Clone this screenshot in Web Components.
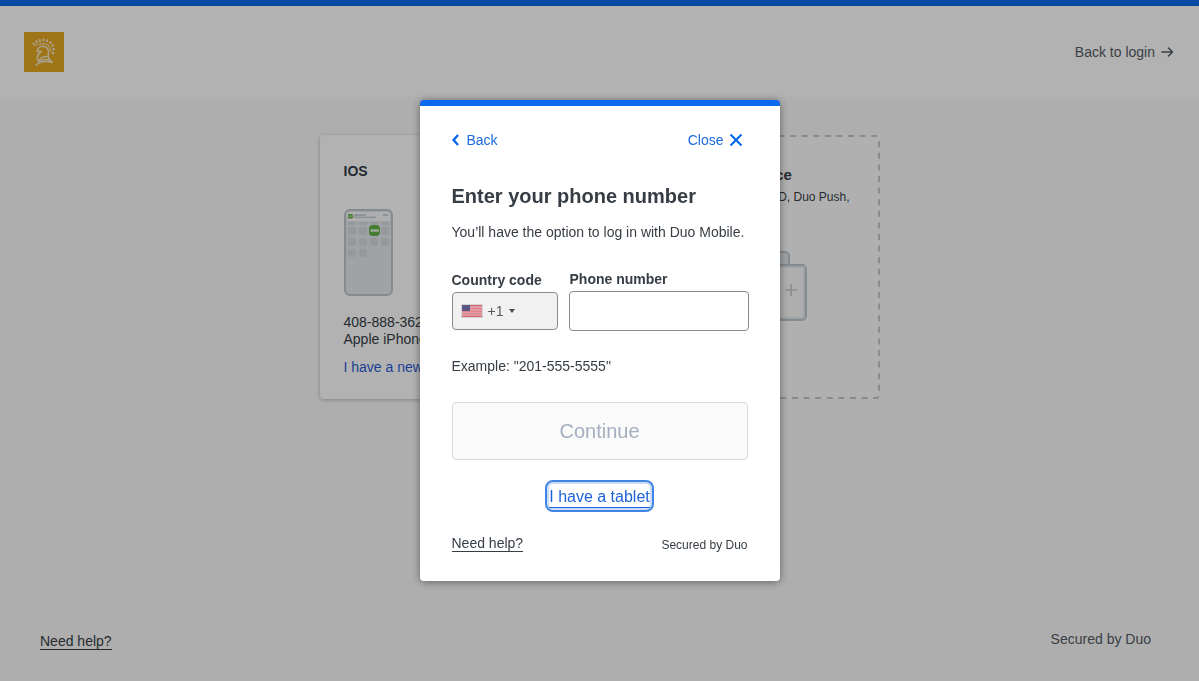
<!DOCTYPE html>
<html lang="en">
<head>
<meta charset="utf-8">
<meta name="viewport" content="width=device-width, initial-scale=1">
<title>Add a device</title>
<style>
  body { margin: 0; font: 14px/20px "Liberation Sans", Arial, sans-serif; color: #363d45; background: #fafafa; }
</style>
</head>
<body>
<device-portal>
  <portal-header slot="header"></portal-header>
  <device-card slot="devices" name="IOS" phone="408-888-3621" model="Apple iPhone"></device-card>
  <add-device-card slot="devices"></add-device-card>
  <portal-footer slot="footer"></portal-footer>
</device-portal>
<modal-layer>
  <phone-form></phone-form>
</modal-layer>

<script>
const define = (name, html) => customElements.define(name, class extends HTMLElement {
  constructor() {
    super();
    const t = document.createElement('template');
    t.innerHTML = '<style>*{box-sizing:border-box}h1,h2,p{margin:0}</style>' + html;
    this.attachShadow({ mode: 'open' }).append(t.content.cloneNode(true));
    for (const el of this.shadowRoot.querySelectorAll('[data-attr]'))
      el.textContent = this.getAttribute(el.dataset.attr) || '';
  }
});

define('device-portal', `
  <style>
    :host { display: flex; flex-direction: column; min-height: 100vh; }
    main { flex: 1; display: grid; grid-template-columns: 268px 268px; gap: 24px; justify-content: center; align-content: start; padding: 38px 24px; }
  </style>
  <slot name="header"></slot>
  <main><slot name="devices"></slot></main>
  <slot name="footer"></slot>`);

define('spartan-logo', `
  <style>:host { display: block; width: 40px; height: 40px; background: #e5a823; } svg { display: block; }</style>
  <svg width="40" height="40" viewBox="0 0 40 40" fill="none" stroke="#f3e6c4" stroke-linecap="round" stroke-linejoin="round" role="img" aria-label="Spartan">
    <path d="M9.500 12l.8.3M12.300 9.300l.5.700M15.700 8l.2.900M19.500 7.500v.9M23.300 8.300l-.3.800M26.700 10.300l-.6.600M29 13.400l-.8.300M30 17.200h-.8M29.300 21.200l-.7-.3" stroke-width="2.200"/>
    <path d="M12 13.500c3.500-2.500 10-2.500 12.500.5 1.700 2 2.300 4.500 2.300 6.500" stroke-width="1.500" stroke-dasharray=".6 2"/>
    <path d="M13.300 19c.2-3.200 3.200-5 6.200-4.600 3.500.5 5.200 3 5 6.300l-.3 4.300c.5 2 2 3.500 4 5.500" stroke-width="1.500"/>
    <path d="M13.300 19.200l4.200.2-3.800 3 .8 1.200-1.400 1.500.5 3.400" stroke-width="1.400"/>
    <path d="M13.600 28.500c2-.5 3.200-2.500 4.600-3.200 2-1 4-.8 5.600-.9M11.800 33.200c3.700-3.900 9-4.700 16.600-2.900M15 29.500c3.500-2.500 7-2.500 10.500-1.200" stroke-width="1.400"/>
  </svg>`);

define('portal-header', `
  <style>
    :host { display: block; background: #fff; border-top: 6px solid #0a6aeb; }
    header { display: flex; justify-content: space-between; align-items: center; padding: 26px 24px 25px; }
    a { display: flex; align-items: center; gap: 5px; color: #545b63; text-decoration: none; }
    svg { display: block; }
  </style>
  <header>
    <spartan-logo></spartan-logo>
    <a href="#login">Back to login
      <svg width="15" height="14" viewBox="0 0 15 14" fill="none" stroke="#545b63" stroke-width="1.600" stroke-linecap="round" stroke-linejoin="round"><path d="M2 7h10.500M8.500 3l4 4-4 4"/></svg>
    </a>
  </header>`);

define('phone-picture', `
  <style>:host, svg { display: block; }</style>
  <svg width="50" height="88" viewBox="0 0 50 88">
    <rect x="1" y="1" width="47" height="85" rx="5" fill="#e4eaee" stroke="#bdc8cd" stroke-width="2"/>
    <g fill="#d6dcdf">
      <path d="M4 13h8v1a2 2 0 0 1-2 2H6a2 2 0 0 1-2-2zM15 13h8v1a2 2 0 0 1-2 2h-4a2 2 0 0 1-2-2zM26 13h8v1a2 2 0 0 1-2 2h-4a2 2 0 0 1-2-2zM37 13h8v1a2 2 0 0 1-2 2h-4a2 2 0 0 1-2-2z"/>
      <rect x="4" y="18" width="8" height="8" rx="2"/><rect x="15" y="18" width="8" height="8" rx="2"/><rect x="37" y="18" width="8" height="8" rx="2"/>
      <rect x="4" y="29" width="8" height="8" rx="2"/><rect x="15" y="29" width="8" height="8" rx="2"/><rect x="26" y="29" width="8" height="8" rx="2"/><rect x="37" y="29" width="8" height="8" rx="2"/>
      <rect x="4" y="40" width="8" height="8" rx="2"/><rect x="15" y="40" width="8" height="8" rx="2"/>
    </g>
    <rect x="3" y="3" width="43" height="9" rx="2" fill="#fafafa"/>
    <path d="M4 5h3a2 2 0 0 1 0 4.500H4z" fill="#63b246"/><path d="M4 7.200h4.500" stroke="#fff" stroke-width=".6"/>
    <path d="M10 6h12M10 8.300h22M39 6h5" stroke="#cbd5da" stroke-width="1.800"/>
    <rect x="25" y="16" width="11" height="11" rx="4" fill="#63b246"/>
    <g fill="#e5f4df"><circle cx="28" cy="21.600" r="1.500"/><circle cx="30.800" cy="21.600" r="1.500"/><circle cx="33.500" cy="21.600" r="1.500"/></g>
  </svg>`);

define('device-card', `
  <style>
    :host { display: block; background: #fff; border-radius: 4px; box-shadow: 0 1px 4px rgba(0,0,0,.25); padding: 26px 24px 22px; height: 264px; box-sizing: border-box; color: #363d45; }
    h2 { font-size: 14px; line-height: 20px; }
    phone-picture { margin: 28px 0 17px; }
    p { line-height: 17px; }
    a { display: inline-block; margin-top: 9px; color: #2a5cd7; text-decoration: none; }
  </style>
  <h2 data-attr="name"></h2>
  <phone-picture></phone-picture>
  <p data-attr="phone"></p>
  <p data-attr="model"></p>
  <a href="#new-phone">I have a new one</a>`);

define('add-device-card', `
  <style>
    :host { display: grid; box-sizing: border-box; height: 264px; }
    .edge, .body { grid-area: 1 / 1; }
    .edge { width: 100%; height: 100%; }
    .body { display: flex; flex-direction: column; align-items: center; padding: 30px 0; }
    h2 { font-size: 15px; line-height: 20px; }
    p { font-size: 12px; line-height: 20px; margin: 2px 30px 43px; align-self: flex-end; }
    svg { display: block; }
  </style>
  <svg class="edge" viewBox="0 0 268 264" preserveAspectRatio="none"><rect x="1" y="1" width="266" height="262" rx="3" fill="#fdfdfd" stroke="#c8c8c8" stroke-width="2" stroke-dasharray="6 5.600"/></svg>
  <div class="body">
    <h2>Add a device</h2>
    <p>Touch ID, Duo Push,</p>
    <svg width="128" height="76" viewBox="0 0 128 76">
      <rect x="5" y="2" width="102" height="68" rx="4" fill="#e4eaee" stroke="#bdc8cd" stroke-width="2"/>
      <rect x="91" y="15" width="33" height="55" rx="4" fill="#fafafa" stroke="#bdc8cd" stroke-width="2"/>
      <rect x="93" y="17" width="29" height="51" rx="2" fill="none" stroke="#e1e9ed" stroke-width="2"/>
      <path d="M103 40h12M109 34v12" stroke="#c5c8ca" stroke-width="1.600"/>
    </svg>
  </div>`);

define('portal-footer', `
  <style>
    :host { display: flex; justify-content: space-between; align-items: flex-start; padding: 0 48px 31px 40px; }
    a { color: #363d45; text-decoration: none; border-bottom: 1px solid #363d45; line-height: 16px; margin-top: 4px; }
    span { color: #545b63; }
  </style>
  <a href="#help">Need help?</a><span>Secured by Duo</span>`);

define('modal-layer', `
  <style>
    :host { position: fixed; inset: 0; display: flex; align-items: center; justify-content: center; background: rgba(0,0,0,.3); overflow: auto; }
  </style>
  <slot></slot>`);

define('country-select', `
  <style>
    :host { display: flex; flex-direction: column; gap: 2px; }
    label { font-weight: bold; }
    div { display: grid; align-items: center; }
    div > * { grid-area: 1 / 1; }
    select { appearance: none; width: 106px; height: 38px; margin: 0; padding: 0 8px 0 35px; border: 1px solid #8b8b8e; border-radius: 4px; background: #f1f1f1; font: inherit; color: #54575a; }
    svg { pointer-events: none; z-index: 1; }
    .flag { margin-left: 9px; }
    .caret { margin-left: 57px; }
  </style>
  <label for="code">Country code</label>
  <div>
    <select id="code"><option>+1</option></select>
    <svg class="flag" width="22" height="14" viewBox="0 0 22 14">
      <rect width="22" height="14" fill="#d6d6d8"/><rect x="1" y="1" width="20" height="12" fill="#e59ba3"/>
      <path d="M1 1.500h20M1 12.500h20" stroke="#d0606c"/><path d="M1 4.500h20M1 7.500h20M1 10h20" stroke="#dc7b85" stroke-width=".8"/>
      <path d="M1 1h8v6H1z" fill="#585585"/>
    </svg>
    <svg class="caret" width="6" height="4" viewBox="0 0 6 4"><path d="M0 0h6L3 4z" fill="#4c4c4c"/></svg>
  </div>`);

define('phone-input', `
  <style>
    :host { display: flex; flex-direction: column; gap: 2px; flex: 1; min-width: 0; }
    label { font-weight: bold; padding-left: 1px; }
    input { width: 100%; height: 40px; margin: 0; padding: 0 12px; border: 1px solid #8b8b8e; border-radius: 4px; background: #fff; font: inherit; }
  </style>
  <label for="tel">Phone number</label>
  <input id="tel" type="tel">`);

define('phone-form', `
  <style>
    :host { display: block; box-sizing: border-box; width: 360px; border-top: 6px solid #0a6aeb; border-radius: 4px; background: #fff; padding: 24px 32px 26px; box-shadow: 0 1px 8px rgba(0,0,0,.45); color: #363d45; }
    nav, footer { display: flex; justify-content: space-between; align-items: center; }
    nav { padding-right: 5px; }
    button { font: inherit; margin: 0; cursor: pointer; }
    nav button { display: flex; align-items: center; gap: 6px; padding: 0; border: 0; background: none; color: #1d69e0; }
    svg { display: block; }
    h1 { font-size: 20px; line-height: 24px; margin-top: 34px; }
    .lead { margin-top: 14px; white-space: nowrap; }
    .fields { display: flex; align-items: center; gap: 11px; margin: 27px -1px 0 0; }
    .hint { margin-top: 25px; }
    .go { display: block; width: 100%; height: 58px; margin-top: 26px; font-size: 20px; color: #a3afbf; background: #fafafa; border: 1px solid #d3d9e3; border-radius: 4px; cursor: default; }
    .alt { display: block; width: fit-content; height: 32px; margin: 20px auto 23px; padding: 2px; border: 2px solid #3f85e4; border-radius: 8px; box-shadow: inset 0 0 0 2px #c9ddf9; font-size: 16px; line-height: 25px; color: #1d62d8; text-decoration: none; }
    .alt span { display: block; height: 24px; border-bottom: 1px solid #1d62d8; }
    footer { align-items: flex-start; }
    .help { color: #363d45; text-decoration: none; border-bottom: 1px solid #363d45; line-height: 16px; }
    small { font-size: 12px; }
  </style>
  <section role="dialog" aria-labelledby="title">
    <nav>
      <button type="button"><svg width="9" height="12" viewBox="0 0 9 12" fill="none" stroke="#0a6aeb" stroke-width="2.400"><path d="M6 1L1.600 6 6 11"/></svg>Back</button>
      <button type="button">Close<svg width="13" height="12" viewBox="0 0 13 12" fill="none" stroke="#0a6aeb" stroke-width="2.200"><path d="M.5.500l11 11M11.500.5l-11 11"/></svg></button>
    </nav>
    <h1 id="title">Enter your phone number</h1>
    <p class="lead">You’ll have the option to log in with Duo Mobile.</p>
    <div class="fields"><country-select></country-select><phone-input></phone-input></div>
    <p class="hint">Example: "201-555-5555"</p>
    <button class="go" type="button" disabled>Continue</button>
    <a class="alt" href="#tablet"><span>I have a tablet</span></a>
    <footer><a class="help" href="#help">Need help?</a><small>Secured by Duo</small></footer>
  </section>`);
</script>
</body>
</html>
